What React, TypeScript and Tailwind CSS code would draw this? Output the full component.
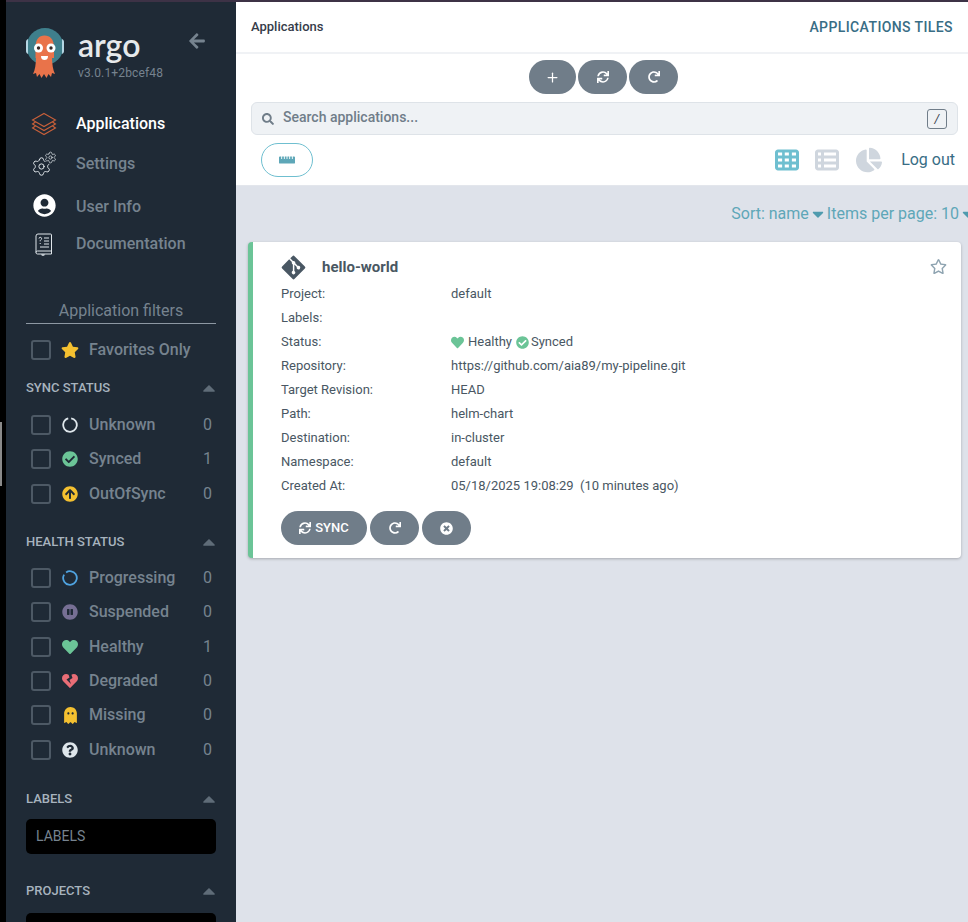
import React from "react";
import { Plus, Settings } from "lucide-react";
import {
  FaArrowCircleUp,
  FaArrowLeft,
  FaCaretDown,
  FaCaretUp,
  FaChartPie,
  FaCheckCircle,
  FaGitAlt,
  FaGhost,
  FaHeart,
  FaHeartBroken,
  FaPauseCircle,
  FaQuestionCircle,
  FaRedo,
  FaRegStar,
  FaRulerHorizontal,
  FaSearch,
  FaStar,
  FaSync,
  FaTimesCircle,
  FaUserCircle,
} from "react-icons/fa";
import { FaTableCells, FaTableList } from "react-icons/fa6";

type filterRow = { icon: React.ReactNode; label: string; count: number };

function Ring({ color, rotate }: { color: string; rotate: number }) {
  return (
    <svg width="16" height="16" viewBox="0 0 16 16" fill="none">
      <circle
        cx="8"
        cy="8"
        r="6.800"
        stroke={color}
        strokeWidth="1.800"
        strokeDasharray="39.500 3.200"
        transform={`rotate(${rotate} 8 8)`}
      />
    </svg>
  );
}

const syncRows: filterRow[] = [
  { icon: <Ring color="#dee6eb" rotate={-80} />, label: "Unknown", count: 0 },
  { icon: <FaCheckCircle className="text-[#6bc497]" />, label: "Synced", count: 1 },
  { icon: <FaArrowCircleUp className="text-[#f4c030]" />, label: "OutOfSync", count: 0 },
];

const healthRows: filterRow[] = [
  { icon: <Ring color="#4fa3e0" rotate={-125} />, label: "Progressing", count: 0 },
  { icon: <FaPauseCircle className="text-[#766f94]" />, label: "Suspended", count: 0 },
  { icon: <FaHeart className="text-[#6bc497]" />, label: "Healthy", count: 1 },
  { icon: <FaHeartBroken className="text-[#e96d76]" />, label: "Degraded", count: 0 },
  { icon: <FaGhost className="text-[#f4c030] text-[17px]" />, label: "Missing", count: 0 },
  { icon: <FaQuestionCircle className="text-[#dee6eb]" />, label: "Unknown", count: 0 },
];

const details = [
  ["Project:", "default"],
  ["Labels:", ""],
  ["Status:", "status"],
  ["Repository:", "https://github.com/aia89/my-pipeline.git"],
  ["Target Revision:", "HEAD"],
  ["Path:", "helm-chart"],
  ["Destination:", "in-cluster"],
  ["Namespace:", "default"],
  ["Created At:", "05/18/2025 19:08:29\u00a0\u00a0(10 minutes ago)"],
];

function ArgoLogo() {
  return (
    <svg width="38" height="52" viewBox="0 0 38 52" className="shrink-0">
      <circle cx="19" cy="18.500" r="18.500" fill="#3f7f8c" />
      <path d="M0 14a3 3 0 0 1 2-3v15a3 3 0 0 1-2-3zM38 14a3 3 0 0 0-2-3v15a3 3 0 0 0 2-3z" fill="#b5d6e4" />
      <path d="M9.500 20C9.500 11 13 7.500 18.500 7.500S28 11 28 20v10H9.500z" fill="#e9734a" />
      <path
        d="M10 29c0 7-1 13-3 17l3-1 1 4 2.500-3 2 4 2.500-4 2.500 4 2-4 2.500 3 1-4 3 1c-2-4-3-10-3-17z"
        fill="#e9734a"
      />
      <circle cx="12.500" cy="20" r="4.500" fill="#fff" />
      <circle cx="25" cy="20" r="4.500" fill="#fff" />
      <circle cx="12.500" cy="20" r="1.700" fill="#3a2a26" />
      <circle cx="25" cy="20" r="1.700" fill="#3a2a26" />
      <path d="M15 28h7c0 3-1.500 4-3.500 4S15 31 15 28z" fill="#fff" />
    </svg>
  );
}

function LayersIcon() {
  return (
    <svg width="26" height="24" viewBox="0 0 26 24" fill="none" stroke="#c9603a" strokeWidth="1.100">
      <path d="M13 1.500 24.500 8 13 14.500 1.500 8z" />
      <path d="M4.500 10 1.500 12 13 18.500 24.500 12l-3-2" />
      <path d="M4.500 14 1.500 16 13 22.500 24.500 16l-3-2" />
    </svg>
  );
}

function GearsIcon() {
  return (
    <div className="relative w-[24px] h-[24px] text-[#e6ebef]">
      <Settings size={21} strokeWidth={1.1} className="absolute left-[-1px] bottom-[-1px]" />
      <Settings size={13} strokeWidth={1.3} className="absolute right-[-1px] top-[-1px] bg-[#1f2a36] rounded-full" />
    </div>
  );
}

function BookIcon() {
  return (
    <svg width="18" height="23" viewBox="0 0 18 23" fill="none" stroke="#dfe5ea" strokeWidth="1">
      <path d="M3 1h12.500a1 1 0 0 1 1 1v16h-14a1.500 1.500 0 0 0-1.500 1.500V3a2 2 0 0 1 2-2z" />
      <path d="M1 19.500A1.500 1.500 0 0 0 2.500 21h14v-3" />
      <path d="M9 5h5M9 8h5M9 11h5M5 14h9" />
      <path d="M4 5.500a1.300 1.300 0 1 1 1.800 1.300C5.200 7.200 5.200 7.600 5.200 8.300M5.200 10v1" />
      <path d="M7 21v1.500l1-.7 1 .7V21" />
    </svg>
  );
}

function NavItem({ icon, label, active, h }: { icon: React.ReactNode; label: string; active?: boolean; h: string }) {
  return (
    <div className={`flex items-center ${h}`}>
      <div className="w-[70px] flex justify-center pl-[6px]">{icon}</div>
      <span className={`text-[16px] font-medium ${active ? "text-white" : "text-[#76838f]"}`}>{label}</span>
    </div>
  );
}

function Checkbox() {
  return <div className="w-[20px] h-[20px] rounded-[3px] border-2 border-[#4d5965] shrink-0" />;
}

function FilterHeader({ title, className }: { title: string; className: string }) {
  return (
    <div className={`flex items-center justify-between h-[20px] ${className}`}>
      <span className="text-[13px] font-medium text-[#a7b3be]">{title}</span>
      <FaCaretUp className="text-[#5f6c78] text-[20px] mr-[-3px]" />
    </div>
  );
}

function FilterRow({ icon, label, count }: filterRow) {
  return (
    <div className="flex items-center h-[34.300px] pl-[5px]">
      <Checkbox />
      <div className="w-[38px] flex justify-center text-[16px]">{icon}</div>
      <span className="flex-1 text-[16px] text-[#76838f] font-medium">{label}</span>
      <span className="text-[16px] text-[#76838f] w-[11px] mr-[2px]">{count}</span>
    </div>
  );
}

function SideBar() {
  return (
    <aside className="w-[230px] h-full shrink-0 bg-[#1f2a36] overflow-hidden">
      <div className="flex pl-[20px] pr-[30px] pt-[26px] h-[101px]">
        <ArgoLogo />
        <div className="ml-[14px] flex-1 flex flex-col">
          <span className="text-[32px] leading-[34px] h-[38px] font-['Lato',sans-serif] font-semibold text-[#e6e9eb]">argo</span>
          <span className="text-[12px] leading-[14px] text-[#76838f] tracking-[0.15px]">v3.0.1+2bcef48</span>
        </div>
        <FaArrowLeft className="text-[#76838f] text-[18px] mt-[4px]" />
      </div>
      <nav className="flex flex-col">
        <NavItem icon={<LayersIcon />} label="Applications" active h="h-[42px]" />
        <NavItem icon={<GearsIcon />} label="Settings" h="h-[38px]" />
        <NavItem icon={<FaUserCircle className="text-white text-[23px] mb-[3px]" />} label="User Info" h="h-[48px]" />
        <NavItem icon={<BookIcon />} label="Documentation" h="h-[26px]" />
      </nav>
      <div className="px-[20px] pt-[42px]">
        <div className="h-[25px] border-b border-[#8d98a3] text-center text-[16px] leading-[24px] text-[#76838f]">
          Application filters
        </div>
        <div className="flex items-center h-[34px] mt-[9px] pl-[5px]">
          <Checkbox />
          <div className="w-[38px] flex justify-center text-[18px]">
            <FaStar className="text-[#f4c030]" />
          </div>
          <span className="text-[16px] text-[#76838f] font-medium">Favorites Only</span>
        </div>
        <FilterHeader title="SYNC STATUS" className="mt-[11px] mb-[10px]" />
        {syncRows.map((row) => (
          <FilterRow key={row.label} {...row} />
        ))}
        <FilterHeader title="HEALTH STATUS" className="mt-[21px] mb-[9px]" />
        {healthRows.map((row) => (
          <FilterRow key={row.label} {...row} />
        ))}
        <FilterHeader title="LABELS" className="mt-[22px] mb-[10px]" />
        <div className="h-[35px] rounded-[5px] bg-black px-[10px] flex items-center text-[14px] text-[#76838f]">LABELS</div>
        <FilterHeader title="PROJECTS" className="mt-[27px] mb-[12px]" />
        <div className="h-[35px] rounded-[5px] bg-black" />
      </div>
    </aside>
  );
}

function PillButton({ children, w }: { children: React.ReactNode; w: string }) {
  return (
    <button className={`${w} h-[34px] rounded-full bg-[#707d89] text-white flex items-center justify-center gap-[4px] text-[13px] font-medium`}>
      {children}
    </button>
  );
}

function AppCard() {
  return (
    <div className="ml-[12px] mr-[7px] bg-white rounded-[4px] border-l-[5px] border-[#6bc497] shadow-[0_1px_3px_rgba(0,0,0,0.25)] h-[316px] pl-[28px] pt-[12px] pr-[14px]">
      <div className="flex items-center h-[26px]">
        <FaGitAlt className="text-[#495763] text-[27px] ml-[-1px]" />
        <span className="ml-[15px] text-[15px] font-bold text-[#495763]">hello-world</span>
        <FaRegStar className="ml-auto text-[#8fa4b1] text-[17px] mt-[-2px]" />
      </div>
      <div className="mt-[2px]">
        {details.map(([label, value]) => (
          <div key={label} className="flex items-center h-[24px] text-[13px] text-[#495763]">
            <span className="w-[170px] shrink-0">{label}</span>
            {value == "status" ? (
              <span className="flex items-center">
                <FaHeart className="text-[#6bc497] text-[13px] mr-[4px]" />
                Healthy
                <FaCheckCircle className="text-[#6bc497] text-[13px] ml-[4px] mr-[2px]" />
                Synced
              </span>
            ) : (
              <span>{value}</span>
            )}
          </div>
        ))}
      </div>
      <div className="flex gap-[3px] mt-[13px]">
        <PillButton w="w-[86px]">
          <FaSync className="text-[12px]" /> SYNC
        </PillButton>
        <PillButton w="w-[49px]">
          <FaRedo className="text-[12px]" />
        </PillButton>
        <PillButton w="w-[49px]">
          <FaTimesCircle className="text-[13px]" />
        </PillButton>
      </div>
    </div>
  );
}

function Main() {
  return (
    <main className="flex-1 min-w-0 h-full bg-[#dee2ea] overflow-hidden">
      <div className="h-[50px] bg-white flex items-center justify-between pl-[15px] pr-[15px]">
        <span className="text-[13px] font-medium text-[#363c4a]">Applications</span>
        <span className="text-[14px] font-medium text-[#386d85] tracking-[0.4px]">APPLICATIONS TILES</span>
      </div>
      <div className="h-[134px] bg-white border-t-2 border-b border-t-[#f0f2f5] border-b-[#e3e6ec]">
        <div className="flex justify-center gap-[2px] pt-[6px] pl-[3px]">
          <PillButton w="w-[47px]">
            <Plus size={15} strokeWidth={2} />
          </PillButton>
          <PillButton w="w-[49px]">
            <FaSync className="text-[12px]" />
          </PillButton>
          <PillButton w="w-[49px]">
            <FaRedo className="text-[12px]" />
          </PillButton>
        </div>
        <div className="ml-[15px] mr-[10px] mt-[8px] h-[33px] rounded-[6px] bg-[#eff2f5] border border-[#dee3e8] flex items-center pl-[10px] pr-[10px]">
          <FaSearch className="text-[#707d89] text-[12px]" />
          <span className="ml-[9px] mb-[2px] text-[14px] font-medium text-[#707d89]">Search applications...</span>
          <span className="ml-auto w-[20px] h-[20px] rounded-[3px] border border-[#707d89] flex items-center justify-center text-[12px] italic text-[#363c4a]">
            /
          </span>
        </div>
        <div className="flex items-center h-[34px] mt-[8px] pl-[25px] pr-[13px]">
          <div className="w-[52px] h-[34px] rounded-full border border-[#6fbfd0] flex items-center justify-center">
            <FaRulerHorizontal className="text-[#5ea7b8] text-[16px]" />
          </div>
          <FaTableCells className="ml-auto text-[#6fbfd0] text-[24px]" />
          <FaTableList className="ml-[16px] text-[#cfd6de] text-[24px]" />
          <FaChartPie className="ml-[17px] text-[#cfd6de] text-[26px]" />
          <span className="ml-[19px] text-[16px] text-[#386d85]">Log out</span>
        </div>
      </div>
      <div className="flex justify-end items-center h-[56px] whitespace-nowrap text-[16px] text-[#5ea7b8] mr-[-9px]">
        Sort: name
        <FaCaretDown className="text-[18px] text-[#4f9bae]" />
        Items per page: 10
        <FaCaretDown className="text-[18px] text-[#4f9bae]" />
      </div>
      <AppCard />
    </main>
  );
}

export default function App() {
  return (
    <div className="flex w-[968px] h-[922px] overflow-hidden bg-black font-['Roboto',sans-serif]">
      <div className="w-[6px] shrink-0 pt-[422px]">
        <div className="w-[2px] h-[64px] bg-[#8a8a8a]" />
      </div>
      <div className="flex-1 min-w-0 flex flex-col">
        <div className="h-[2px] bg-[#3d3246] shrink-0" />
        <div className="flex flex-1 min-h-0">
          <SideBar />
          <Main />
        </div>
      </div>
    </div>
  );
}
